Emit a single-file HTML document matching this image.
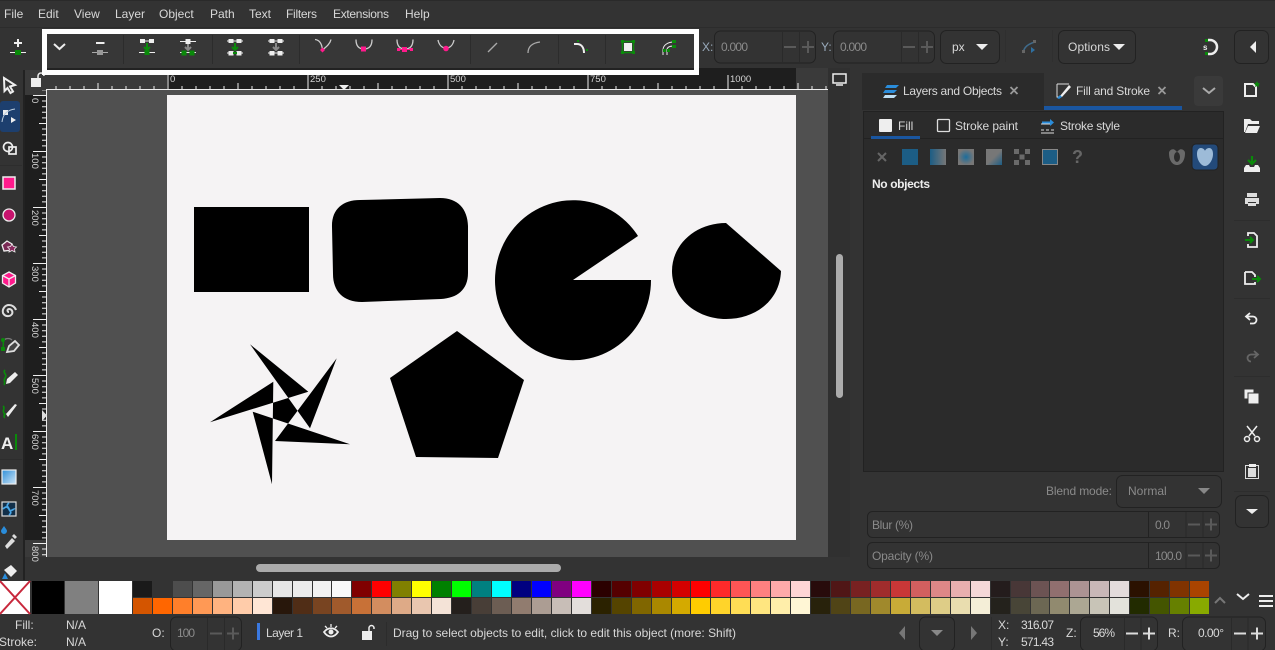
<!DOCTYPE html>
<html><head><meta charset="utf-8">
<style>
html,body{margin:0;padding:0;background:#333;width:1275px;height:650px;overflow:hidden}
svg{position:absolute;left:0;top:0;font-family:"Liberation Sans",sans-serif;font-size:12px}
.t{fill:#d8d8d8}.d{fill:#8a8a8a}.w{fill:#eee}
.f{fill:#333;stroke:#222;stroke-width:1}
.r{font-size:9.5px;fill:#d5d5d5}
#pal{position:absolute;left:133px;top:581px;width:1076px;height:33px;display:grid;grid-template-columns:repeat(54,1fr);grid-template-rows:1fr 1fr;gap:1px}
#pal i{display:block}
</style></head><body>
<svg width="1275" height="650" viewBox="0 0 1275 650">
<defs>
<linearGradient id="g1"><stop offset="0" stop-color="#1c5d85"/><stop offset="1" stop-color="#777"/></linearGradient>
<radialGradient id="g2"><stop offset="0" stop-color="#1c6d9c"/><stop offset="1" stop-color="#777"/></radialGradient>
<linearGradient id="g3" x1="0" y1="0" x2="1" y2="1"><stop offset="0" stop-color="#777"/><stop offset=".5" stop-color="#777"/><stop offset="1" stop-color="#1c5d85"/></linearGradient>
<linearGradient id="g4" x1="0" y1="0" x2="1" y2="1"><stop offset="0" stop-color="#2f8fd8"/><stop offset="1" stop-color="#cfe6f7"/></linearGradient>
<pattern id="hr" patternUnits="userSpaceOnUse" x="27.5" y="0" width="140" height="100"><path d="M.5 75V89M14.5 86V89M28.5 86V89M42.5 86V89M56.5 86V89M70.5 83V89M84.5 86V89M98.5 86V89M112.5 86V89M126.5 86V89" stroke="#eee" fill="none"/></pattern>
<pattern id="vr" patternUnits="userSpaceOnUse" x="0" y="39" width="60" height="56"><path d="M33 .5H46M42 6H46M42 11.7H46M42 17.3H46M42 22.9H46M39 28.5H46M42 34H46M42 39.7H46M42 45.3H46M42 50.9H46" stroke="#eee" fill="none"/></pattern>
</defs>
<rect width="1275" height="650" fill="#333"/>
<rect width="1275" height="1" fill="#2a2a2a"/>
<rect y="27" width="1275" height="1" fill="#2c2c2c"/>
<!-- menu -->
<g class="t"><text x="4" y="18">File</text><text x="38" y="18">Edit</text><text x="74" y="18">View</text><text x="115" y="18">Layer</text><text x="159" y="18">Object</text><text x="210" y="18">Path</text><text x="249" y="18">Text</text><text x="286" y="18" textLength="31">Filters</text><text x="333" y="18" textLength="56">Extensions</text><text x="405" y="18">Help</text></g>
<!-- add node -->
<path d="M14 43h8M18 39v8" stroke="#eee" stroke-width="2"/><path d="M10 52.500h16" stroke="#eee"/><rect x="15" y="50" width="6" height="5" fill="#0a8a0a"/>
<!-- rulers -->
<rect x="828" y="68" width="22" height="489" fill="#303030"/>
<rect x="699" y="68" width="129" height="22" fill="#1e1e1e"/>
<rect x="796" y="68" width="32" height="22" fill="#3a3a3a"/>
<rect x="25" y="70" width="142" height="20" fill="#3a3a3a"/>
<rect x="167" y="70" width="532" height="20" fill="#1e1e1e"/>
<rect x="25" y="90" width="21" height="467" fill="#3a3a3a"/>
<rect x="25" y="95" width="21" height="445" fill="#1e1e1e"/>
<rect x="47" y="70" width="781" height="20" fill="url(#hr)"/>
<rect x="46" y="89" width="782" height="1" fill="#eee"/>
<rect x="25" y="90" width="22" height="467" fill="url(#vr)"/>
<rect x="46" y="90" width="1" height="467" fill="#eee"/>
<g class="r"><text x="170" y="82">0</text><text x="310" y="82">250</text><text x="450" y="82">500</text><text x="590" y="82">750</text><text x="730" y="82">1000</text></g>
<g class="r"><text transform="translate(32 98) rotate(90)">0</text><text transform="translate(32 153) rotate(90)">100</text><text transform="translate(32 210) rotate(90)">200</text><text transform="translate(32 266) rotate(90)">300</text><text transform="translate(32 322) rotate(90)">400</text><text transform="translate(32 378) rotate(90)">500</text><text transform="translate(32 434) rotate(90)">600</text><text transform="translate(32 490) rotate(90)">700</text><text transform="translate(32 546) rotate(90)">800</text></g>
<path d="M339 85h10l-5 5z" fill="#eee"/><path d="M42 410v11l5-5.500z" fill="#ddd"/>
<!-- lock corner -->
<rect x="31" y="78" width="10" height="9" fill="#eee"/><path d="M38 79v-3a3 3 0 0 1 6 0" stroke="#eee" stroke-width="1.500" fill="none"/>
<!-- canvas -->
<rect x="47" y="90" width="781" height="467" fill="#505050"/>
<rect x="167" y="95" width="629" height="445" fill="#f5f3f4"/>
<rect x="194" y="207" width="115" height="85"/>
<path d="M332 227C331.500 209 343 200 360 200L440 198C458 198 467.500 209 468 226L468 273C468 290 457 298 441 299L362 302C343 302 333 291 333 274Z"/>
<path d="M651 280A78 80 0 1 1 638 236L573 280Z"/>
<path d="M726 223L781 271C780 300 756 319 726 319C696 319 672 298 672 271C672 244 696 223 726 223Z"/>
<path d="M457 331L524 380L498 458L416 457L390 378Z"/>
<path fill-rule="evenodd" d="M250 344.300L308.300 391.700L210 422.300L273.300 381.700L272 484.300L252.700 411.700L350 444.300L275 441L336.700 358.300L310 428.300Z"/>
<!-- scrollbars -->
<rect x="256" y="564" width="305" height="8" rx="4" fill="#ababab"/>
<rect x="836" y="254" width="7" height="144" rx="3.500" fill="#ababab"/>
<!-- monitor icon -->
<path d="M833 74h13v9h-13z" fill="none" stroke="#eee" stroke-width="1.500"/><path d="M836 85h7" stroke="#eee" stroke-width="1.500"/>
<!-- grip -->
<g fill="#ddd"><rect x="855" y="317" width="3" height="2"/><rect x="855" y="322" width="3" height="2"/><rect x="855" y="327" width="3" height="2"/></g>
<!-- highlighted toolbar -->
<rect x="44.500" y="31.500" width="652" height="41" fill="#373737" stroke="#fff" stroke-width="5"/>
<rect x="47" y="68" width="647" height="2" fill="#222"/>
<path d="M123.500 35V64M212.500 35V64M299.500 35V64M470.500 35V64M558.500 35V64M605.500 35V64" stroke="#2c2c2c"/>
<path d="M54 44l5.500 5 5.500-5" stroke="#eee" stroke-width="2" fill="none"/>
<!-- delete -->
<path d="M96 43h8.500" stroke="#eee" stroke-width="2"/><path d="M92 52.500h16" stroke="#aaa"/><rect x="97" y="50" width="6" height="5" fill="#999"/>
<!-- join nodes -->
<path d="M144 41h7" stroke="#eee"/><rect x="140" y="39" width="5" height="4" fill="#eee"/><rect x="149" y="39" width="5" height="4" fill="#eee"/>
<path d="M147 43v6M144 47l3 3 3-3" stroke="#0a8a0a" stroke-width="2" fill="none"/><path d="M139 52.500h16" stroke="#eee"/><rect x="144.500" y="50" width="5" height="5" fill="#0a8a0a"/>
<!-- break -->
<path d="M180 41.500h16" stroke="#eee"/><rect x="185.500" y="39" width="5" height="5" fill="#eee"/><path d="M188 44v5M185 47l3 3 3-3" stroke="#888" stroke-width="2" fill="none"/><path d="M180 52.500h16" stroke="#eee"/><rect x="181.500" y="50.500" width="5" height="5" fill="#0a8a0a"/><rect x="189.500" y="50.500" width="5" height="5" fill="#0a8a0a"/>
<!-- join segment -->
<path d="M227 41h16M227 53h16" stroke="#eee"/><rect x="228.500" y="39" width="5" height="4" fill="#eee"/><rect x="236.500" y="39" width="5" height="4" fill="#eee"/><rect x="228.500" y="51" width="5" height="4.500" fill="#eee"/><rect x="236.500" y="51" width="5" height="4.500" fill="#eee"/><path d="M235 43v6M232 47l3 3 3-3" stroke="#0a8a0a" stroke-width="2" fill="none"/><path d="M233 53h4" stroke="#0a8a0a" stroke-width="2"/>
<!-- delete segment -->
<path d="M268 41h16M268 53h16" stroke="#eee"/><path d="M273 41h6" stroke="#888" stroke-width="2"/><rect x="269.500" y="39" width="5" height="4" fill="#eee"/><rect x="277.500" y="39" width="5" height="4" fill="#eee"/><rect x="269.500" y="51" width="5" height="4.500" fill="#eee"/><rect x="277.500" y="51" width="5" height="4.500" fill="#eee"/><path d="M276 43v6M273 47l3 3 3-3" stroke="#888" stroke-width="2" fill="none"/>
<!-- node types -->
<path d="M315 39.500C320 40 322 45 322.500 50M331 39.500C330 44 326 47 322.500 50" stroke="#ccc" stroke-width="1.300" fill="none"/><path d="M322.500 47.500l2.500 2.500-2.500 2.500-2.500-2.500z" fill="#ff1a8c"/>
<path d="M356 39.500C356 46 359 49 364 49C369 49 372 46 372 39.500" stroke="#ccc" stroke-width="1.300" fill="none"/><rect x="361" y="46.500" width="5" height="5" fill="#ff1a8c"/>
<path d="M397 39.500C397 46 400 49 405 49C410 49 413 46 413 39.500" stroke="#ccc" stroke-width="1.300" fill="none"/><rect x="402" y="47" width="5" height="5" fill="#ff1a8c"/><path d="M397.500 49.500h15" stroke="#ff1a8c"/><rect x="397" y="48" width="3" height="3" fill="#ff1a8c"/><rect x="410" y="48" width="3" height="3" fill="#ff1a8c"/>
<path d="M438 40C439 45 442 48 446 48C450 48 453 45 454 40" stroke="#ccc" stroke-width="1.300" fill="none"/><circle cx="446" cy="48.500" r="2.800" fill="#ff1a8c"/>
<path d="M488 52L497 43" stroke="#aaa" stroke-width="1.300"/>
<path d="M528 53C528 47 532 43 540 42" stroke="#aaa" stroke-width="1.300" fill="none"/>
<path d="M574 44h3C581 44 584 47 584 53" stroke="#eee" stroke-width="2" fill="none"/><rect x="577" y="40" width="2" height="2" fill="#0a8a0a"/><rect x="586" y="49" width="2" height="2" fill="#0a8a0a"/>
<rect x="622.500" y="41.500" width="11" height="11" fill="none" stroke="#0a8a0a" stroke-width="1.500"/><rect x="624" y="43" width="8" height="8" fill="#eee"/><g fill="#0a8a0a"><rect x="621" y="40" width="3" height="3"/><rect x="632" y="40" width="3" height="3"/><rect x="621" y="51" width="3" height="3"/><rect x="632" y="51" width="3" height="3"/></g>
<path d="M663 55V50C663 45 668 42 674 42M667 55V50C667 47 670 46 674 46" stroke="#eee" fill="none"/><g fill="#0a8a0a"><rect x="672" y="40" width="4" height="3"/><rect x="672" y="45" width="4" height="3"/><rect x="663" y="49" width="3" height="3"/><rect x="667" y="49" width="3" height="3"/></g>
<!-- coord -->
<text x="702" y="51" fill="#9ab">X:</text>
<rect x="714.500" y="31" width="101" height="32" rx="6" class="f"/><text x="721" y="51" class="d" textLength="27">0.000</text><path d="M782.500 31V63M799.500 31V63" stroke="#2a2a2a"/><path d="M784 47h12M802 47h12M808 41v12" stroke="#5a5a5a" stroke-width="2"/>
<text x="821" y="51" fill="#9ab">Y:</text>
<rect x="833.500" y="31" width="101" height="32" rx="6" class="f"/><text x="840" y="51" class="d" textLength="27">0.000</text><path d="M901.500 31V63M918.500 31V63" stroke="#2a2a2a"/><path d="M903 47h12M921 47h12M927 41v12" stroke="#5a5a5a" stroke-width="2"/>
<rect x="940.500" y="30.500" width="59" height="33" rx="6" class="f"/><text x="952" y="51" class="t">px</text><path d="M976 44h12l-6 6z" fill="#eee"/>
<path d="M1005.500 30V62M1052.500 30V62" stroke="#2f2f2f"/>
<path d="M1023 53C1024 47 1028 44 1035 42" stroke="#3f6a8a" stroke-width="1.500" fill="none"/><rect x="1022" y="50" width="3" height="3" fill="#666"/><rect x="1033" y="40" width="3" height="3" fill="#666"/><path d="M1031 47l4 3-4 3z" fill="#2f6f9f"/>
<rect x="1058.500" y="30.500" width="77" height="33" rx="6" class="f"/><text x="1068" y="51" class="t" textLength="42">Options</text><path d="M1113 44h12l-6 6z" fill="#eee"/>
<path d="M1208 40h2a7 7 0 0 1 0 14h-2" fill="none" stroke="#eee" stroke-width="2.500"/><rect x="1205" y="39" width="3" height="3" fill="#0a8a0a"/><rect x="1205" y="52" width="3" height="3" fill="#0a8a0a"/><text x="1203" y="50" fill="#eee" font-size="8" font-weight="bold">s</text>
<rect x="1234.500" y="30.500" width="34" height="33" rx="6" class="f"/><path d="M1256 41v12l-6-6z" fill="#eee"/>
<!-- left toolbar -->
<rect x="23" y="70" width="2" height="510" fill="#222"/>
<path d="M0 165.500h22M0 459.500h22" stroke="#2d2d2d"/>
<rect x="0" y="101" width="20" height="31" rx="3" fill="#1d3f6e"/>
<path d="M4 78l11 7-5 1.500 3 5-2.500 1.500-3-5-3 3z" fill="#333" stroke="#eee" stroke-width="2"/>
<rect x="3" y="110" width="5" height="5" fill="#eee"/><path d="M2 122C3 113 8 110 15 109" stroke="#bcd" fill="none"/><path d="M11 117l5 3-5 3z" fill="#eee"/>
<circle cx="8" cy="147" r="4.500" fill="none" stroke="#eee" stroke-width="1.700"/><rect x="9" y="147" width="7" height="7" fill="none" stroke="#eee" stroke-width="1.700"/>
<rect x="3" y="177" width="12" height="12" fill="#ff1a8c" stroke="#eee" stroke-width="1.500"/>
<circle cx="9" cy="215" r="6" fill="#c8146e" stroke="#eee" stroke-width="1.300"/>
<path d="M7 241l5 3 0 6-8 1-2-6z" fill="#7a2a55" stroke="#eee" stroke-width="1.300"/><path d="M12 244l1.500 2.500 3 .5-2 2 .5 3-3-1.500-3 1.500.5-3-2-2 3-.5z" fill="#8a2a60" stroke="#eee" stroke-width=".8"/>
<path d="M9 272l6.500 3.500v7.500L9 287l-6.500-4v-7.500z" fill="#ff1a8c" stroke="#eee" stroke-width="1.300"/><path d="M2.500 275.500L9 279l6.500-3.500M9 279v8" stroke="#eee" stroke-width="1.300" fill="none"/>
<path d="M9 312c-2 0-2-3 0-3 3 0 4 3 3 5-2 3-7 3-9-1-1-4 2-8 6-8 3 0 6 2 7 5" fill="none" stroke="#ddd" stroke-width="2"/>
<path d="M3 341C4 343 3 346 3 349" stroke="#0a8a0a" stroke-width="1.500" fill="none"/><path d="M4 340C6 338 10 338 12 340" stroke="#777" stroke-width="1.300" fill="none"/><rect x="1" y="347" width="4" height="4" fill="#0a8a0a"/><circle cx="3" cy="340" r="2" fill="#0a8a0a"/><path d="M7 352l2-6 6-5 4 4-5 6z" fill="#444" stroke="#ddd" stroke-width="1.800"/>
<path d="M5 370C2 373 8 374 5 378C3 381 6 382 4 385" stroke="#0a8a0a" stroke-width="1.700" fill="none"/><path d="M7 379l8-7 3 3-8 8-4 1z" fill="#eee"/>
<path d="M3 406C6 408 1 411 5 414C3 416 5 417 4 418" stroke="#0a8a0a" stroke-width="1.700" fill="none"/><path d="M6 414l9-10 2 1-9 12z" fill="#eee"/>
<text x="1" y="449" fill="#eee" font-size="17" font-weight="bold">A</text><rect x="15" y="434" width="2" height="16" fill="#0a8a0a"/>
<rect x="2" y="470" width="14" height="14" fill="url(#g4)" stroke="#eee" stroke-width="1.200"/>
<rect x="2" y="502" width="14" height="14" fill="#12304a" stroke="#ddd" stroke-width="1.200"/><path d="M3 509C7 505 8 508 9 509C10 513 14 508 15 509M9 503C5 506 9 507 9 509C9 511 13 512 9 515" stroke="#49a7e8" stroke-width="1.700" fill="none"/>
<path d="M4 526c-2 3-3 4-3 5a3 3 0 0 0 6 0c0-1-1-2-3-5z" fill="#2a8ddb"/><path d="M5 546l7-8 3 3-8 8zM12 536l2-2 3 3-2 2z" fill="#ddd"/>
<path d="M4 570l7-5 6 6-6 6z" fill="#eee"/><path d="M2 579l3-6 3 6z" fill="#2a8ddb"/>
<!-- right panel -->
<rect x="850" y="70" width="12" height="510" fill="#333"/>
<rect x="862" y="73" width="362" height="37" fill="#2b2b2b"/>
<rect x="1044" y="73" width="138" height="37" fill="#333"/>
<rect x="1182" y="73" width="42" height="37" fill="#333"/>
<rect x="1044" y="106" width="138" height="4" fill="#1a56a0"/>
<rect x="1194" y="76" width="29" height="30" rx="4" fill="#3a3a3a"/><path d="M1203 88l6 5 6-5" stroke="#aaa" stroke-width="2" fill="none"/>
<path d="M887 85h12l-3 3h-11zM885 90h12l-3 3h-11z" fill="#2a8ddb"/><path d="M885 95h12l-3 3h-11z" fill="#bfe0f5"/>
<text x="903" y="95" class="t" textLength="99">Layers and Objects</text>
<path d="M1010.500 87l7 7M1017.500 87l-7 7" stroke="#999" stroke-width="1.800"/>
<path d="M1057 84h12M1057 84v13h3" stroke="#ddd" fill="none"/><path d="M1060 96l9-11 2 2-9 10z" fill="#eee"/><path d="M1057 98l3-3 2 2-3 2z" fill="#2a8ddb"/>
<text x="1076" y="95" class="t" textLength="74">Fill and Stroke</text>
<path d="M1158.500 87l7 7M1165.500 87l-7 7" stroke="#999" stroke-width="1.800"/>
<rect x="863.500" y="111.500" width="360" height="360" fill="#2b2b2b" stroke="#222"/>
<rect x="864" y="138" width="359" height="1" fill="#222"/>
<rect x="871" y="136" width="49" height="3" fill="#1a56a0"/>
<rect x="879" y="119" width="13" height="13" rx="1" fill="#eee"/><text x="898" y="130" class="t">Fill</text>
<rect x="937.500" y="119.500" width="12" height="12" rx="1" fill="none" stroke="#ddd" stroke-width="1.300"/><text x="955" y="130" class="t" textLength="63">Stroke paint</text>
<path d="M1041 124h11M1041 130h3M1046 130h3M1051 130h3M1041 133h13" stroke="#ddd"/><path d="M1042 122.500h9" stroke="#2a8ddb" stroke-width="2"/><path d="M1050 119l4 3.500-4 3.500z" fill="#2a8ddb"/>
<text x="1060" y="130" class="t" textLength="60">Stroke style</text>
<path d="M878 153l8 8M886 153l-8 8" stroke="#666" stroke-width="2"/>
<rect x="902" y="149" width="16" height="16" fill="#1c5d85"/>
<rect x="930" y="149" width="16" height="16" fill="url(#g1)"/>
<rect x="958" y="149" width="16" height="16" fill="url(#g2)"/>
<rect x="986" y="149" width="16" height="16" fill="url(#g3)"/>
<g fill="#6a6a6a"><rect x="1014" y="149" width="5" height="5"/><rect x="1025" y="149" width="5" height="5"/><rect x="1019.500" y="154.500" width="5" height="5"/><rect x="1014" y="160" width="5" height="5"/><rect x="1025" y="160" width="5" height="5"/></g>
<rect x="1042.500" y="149.500" width="15" height="15" fill="#1c5d85" stroke="#888" stroke-width="1"/>
<text x="1072" y="163" fill="#666" font-size="18" font-weight="bold">?</text>
<path d="M1169 153C1169 150 1173 148 1175 150L1177 152L1179 150C1181 148 1185 150 1185 153C1185 160 1182 165 1177 165C1172 165 1169 160 1169 153Z" fill="#6a6a6a"/><ellipse cx="1177" cy="157" rx="3" ry="5" fill="#2b2b2b"/>
<rect x="1192" y="144" width="26" height="26" rx="4" fill="#234a7a" stroke="#222"/>
<path d="M1201 148C1198 148 1197 151 1197 154C1197 160 1201 166 1205 166C1209 166 1213 160 1213 154C1213 151 1212 148 1209 148C1207 148 1205 150 1205 151C1205 150 1203 148 1201 148Z" fill="#9dbbd8"/>
<text x="872" y="188" class="w" font-weight="bold" font-size="12" textLength="58">No objects</text>
<text x="1046" y="495" class="d" textLength="66">Blend mode:</text>
<rect x="1116.500" y="475.500" width="105" height="32" rx="6" class="f"/><text x="1128" y="495" class="d">Normal</text><path d="M1198 488h12l-6 6z" fill="#888"/>
<rect x="867.500" y="511.500" width="352" height="26" rx="5" class="f"/><text x="872" y="529" class="d" textLength="41">Blur (%)</text><path d="M1148.500 512v25" stroke="#222"/><text x="1155" y="529" class="d" textLength="15">0.0</text><path d="M1186 512v25M1203 512v25" stroke="#2a2a2a"/><path d="M1188 524.500h12M1205 524.500h12M1211 518.500v12" stroke="#5a5a5a" stroke-width="2"/>
<rect x="867.500" y="542.500" width="352" height="26" rx="5" class="f"/><text x="872" y="560" class="d" textLength="61">Opacity (%)</text><path d="M1148.500 543v25" stroke="#222"/><text x="1155" y="560" class="d" textLength="27">100.0</text><path d="M1186 543v25M1203 543v25" stroke="#2a2a2a"/><path d="M1188 555.500h12M1205 555.500h12M1211 549.500v12" stroke="#5a5a5a" stroke-width="2"/>
<!-- right toolbar -->
<path d="M1234 220.500h36M1234 298.500h36M1234 376.500h36M1234 491.500h36" stroke="#2d2d2d"/>
<path d="M1245 84h8l3 3v9h-11z" fill="none" stroke="#eee" stroke-width="2"/><path d="M1257 81l1 2 2 .5-1.500 1.500.5 2-2-1-2 1 .5-2-1.500-1.500 2-.5z" fill="#0a8a0a"/>
<path d="M1244 132v-13h6l2 2h7v3h-11l-3 8zM1245 133l3-7h12l-3 7z" fill="#eee"/>
<path d="M1252 156v7M1248 160l4 4 4-4" stroke="#0a8a0a" stroke-width="2.200" fill="none"/><path d="M1246 165h3l1 2h4l1-2h3l2 3v4h-16v-4z" fill="#eee"/>
<path d="M1247 193h10v4h-10zM1245 198h14v6h-3v-2h-8v2h-3zM1248 203h8v3h-8z" fill="#ddd"/>
<path d="M1248 236v-3h6l3 3v11h-9v-3" fill="none" stroke="#eee" stroke-width="1.800"/><path d="M1245 240h7M1250 237l3 3-3 3" stroke="#0a8a0a" stroke-width="2" fill="none"/>
<path d="M1245 272h7l3 3v2M1255 282v2h-10v-12" fill="none" stroke="#eee" stroke-width="1.800"/><path d="M1252 279h7M1257 276l3 3-3 3" stroke="#0a8a0a" stroke-width="2" fill="none"/>
<path d="M1250 313l-4 3.500 4 3.500M1246 316.500h7a3.500 3.500 0 0 1 0 7h-3" fill="none" stroke="#eee" stroke-width="1.800"/>
<path d="M1254 351l4 3.500-4 3.500M1258 354.500h-7a3.500 3.500 0 0 0 0 7h0" fill="none" stroke="#666" stroke-width="1.800"/>
<rect x="1244" y="389" width="10" height="10" fill="#eee" stroke="#333"/><rect x="1248" y="393" width="11" height="11" fill="#eee" stroke="#333"/>
<path d="M1247 426l8 10M1257 426l-8 10" stroke="#eee" stroke-width="1.500"/><circle cx="1247" cy="439" r="2.500" fill="none" stroke="#eee" stroke-width="1.500"/><circle cx="1257" cy="439" r="2.500" fill="none" stroke="#eee" stroke-width="1.500"/>
<rect x="1245.500" y="465.500" width="13" height="13" fill="none" stroke="#ddd"/><rect x="1249" y="464" width="7" height="3" fill="#eee"/><path d="M1248 468h8v9h-8z" fill="#ddd"/>
<rect x="1235.500" y="495.500" width="33" height="32" rx="6" class="f"/><path d="M1246 509h12l-6 5z" fill="#eee"/>
<!-- palette left -->
<rect x="0" y="581" width="30" height="33" fill="#fff"/><path d="M0 581L30 614M30 581L0 614" stroke="#c8283c" stroke-width="2"/>
<rect x="32" y="581" width="32" height="33" fill="#000"/>
<rect x="65" y="581" width="33" height="33" fill="#808080"/>
<rect x="99" y="581" width="33" height="33" fill="#fff"/>
<path d="M1215 603l5-5 5 5" stroke="#777" stroke-width="2" fill="none"/><path d="M1237 594l6 5 6-5" stroke="#eee" stroke-width="2" fill="none"/><path d="M1259 596h14M1259 601h14M1259 606h14" stroke="#eee" stroke-width="2"/>
<!-- status -->
<text x="15" y="629" class="t">Fill:</text><text x="66" y="629" class="t">N/A</text>
<text x="-1" y="646" class="t">Stroke:</text><text x="66" y="646" class="t">N/A</text>
<text x="152" y="637" class="t">O:</text>
<rect x="170.500" y="617" width="71" height="34" rx="6" class="f"/><text x="177" y="637" class="d" textLength="18">100</text><path d="M207.500 617v33M224.500 617v33" stroke="#2a2a2a"/><path d="M210 633.500h12M227 633.500h12M233 627.500v12" stroke="#5a5a5a" stroke-width="2"/>
<rect x="257" y="623" width="3" height="17" fill="#3a78e0"/>
<text x="266" y="637" class="t" textLength="37">Layer 1</text>
<path d="M324 632C328 627 334 627 338 632C334 638 328 638 324 632Z" fill="none" stroke="#eee" stroke-width="1.800"/><circle cx="331" cy="632" r="2.500" fill="#eee"/><path d="M325 626l2 2M337 626l-2 2M331 624v3" stroke="#eee" stroke-width="1.300"/>
<rect x="362" y="631" width="10" height="9" fill="#eee"/><path d="M369 631v-3a2.500 2.500 0 0 1 5 0v1" fill="none" stroke="#eee" stroke-width="1.500"/>
<path d="M386.500 622v24" stroke="#2c2c2c"/>
<text x="393" y="637" class="t" textLength="343">Drag to select objects to edit, click to edit this object (more: Shift)</text>
<path d="M905 626v14l-6-7z" fill="#777"/>
<rect x="919.500" y="617" width="35" height="34" rx="6" class="f"/><path d="M931 630h12l-6 6z" fill="#888"/>
<path d="M971 626v14l6-7z" fill="#777"/>
<path d="M991.500 617v33" stroke="#2c2c2c"/>
<text x="998" y="629" class="t">X:</text><text x="1021" y="629" class="t" textLength="33">316.07</text>
<text x="998" y="646" class="t">Y:</text><text x="1021" y="646" class="t" textLength="33">571.43</text>
<text x="1066" y="637" class="t">Z:</text>
<rect x="1080.500" y="617" width="77" height="34" rx="6" class="f"/><text x="1093" y="637" class="t" textLength="22">56%</text><path d="M1124.500 617v33M1141 617v33" stroke="#2a2a2a"/><path d="M1126 633.500h12M1143 633.500h12M1149 627.500v12" stroke="#ddd" stroke-width="2"/>
<text x="1168" y="637" class="t">R:</text>
<rect x="1182.500" y="617" width="83" height="34" rx="6" class="f"/><text x="1198" y="637" class="t" textLength="26">0.00°</text><path d="M1231.500 617v33M1248 617v33" stroke="#2a2a2a"/><path d="M1234 633.500h12M1251 633.500h12M1257 627.500v12" stroke="#ddd" stroke-width="2"/>
</svg>
<div id="pal"><i style="background:#1a1a1a"></i><i style="background:#333"></i><i style="background:#4d4d4d"></i><i style="background:#666"></i><i style="background:#999"></i><i style="background:#b3b3b3"></i><i style="background:#ccc"></i><i style="background:#e6e6e6"></i><i style="background:#ececec"></i><i style="background:#f2f2f2"></i><i style="background:#f9f9f9"></i><i style="background:#800000"></i><i style="background:#f00"></i><i style="background:#808000"></i><i style="background:#ff0"></i><i style="background:#008000"></i><i style="background:#0f0"></i><i style="background:#008080"></i><i style="background:#0ff"></i><i style="background:#000080"></i><i style="background:#00f"></i><i style="background:#800080"></i><i style="background:#f0f"></i><i style="background:#2b0000"></i><i style="background:#550000"></i><i style="background:#800000"></i><i style="background:#a00"></i><i style="background:#d40000"></i><i style="background:#f00"></i><i style="background:#ff2a2a"></i><i style="background:#f55"></i><i style="background:#ff8080"></i><i style="background:#faa"></i><i style="background:#ffd5d5"></i><i style="background:#280b0b"></i><i style="background:#501616"></i><i style="background:#782121"></i><i style="background:#a02c2c"></i><i style="background:#c83737"></i><i style="background:#d35f5f"></i><i style="background:#de8787"></i><i style="background:#e9afaf"></i><i style="background:#f4d7d7"></i><i style="background:#241c1c"></i><i style="background:#483737"></i><i style="background:#6c5353"></i><i style="background:#916f6f"></i><i style="background:#ac9393"></i><i style="background:#c8b7b7"></i><i style="background:#e3dbdb"></i><i style="background:#2b1100"></i><i style="background:#520"></i><i style="background:#803300"></i><i style="background:#a40"></i><i style="background:#d45500"></i><i style="background:#f60"></i><i style="background:#ff7f2a"></i><i style="background:#f95"></i><i style="background:#ffb380"></i><i style="background:#fca"></i><i style="background:#ffe6d5"></i><i style="background:#28170b"></i><i style="background:#502d16"></i><i style="background:#784421"></i><i style="background:#a05a2c"></i><i style="background:#c87137"></i><i style="background:#d38d5f"></i><i style="background:#deaa87"></i><i style="background:#e9c6af"></i><i style="background:#f4e3d7"></i><i style="background:#241f1c"></i><i style="background:#483e37"></i><i style="background:#6c5d53"></i><i style="background:#917c6f"></i><i style="background:#ac9d93"></i><i style="background:#c8beb7"></i><i style="background:#e3dedb"></i><i style="background:#2b2200"></i><i style="background:#540"></i><i style="background:#806600"></i><i style="background:#a80"></i><i style="background:#d4aa00"></i><i style="background:#fc0"></i><i style="background:#ffd42a"></i><i style="background:#fd5"></i><i style="background:#ffe680"></i><i style="background:#fea"></i><i style="background:#fff6d5"></i><i style="background:#28220b"></i><i style="background:#504416"></i><i style="background:#786721"></i><i style="background:#a0892c"></i><i style="background:#c8ab37"></i><i style="background:#d3bc5f"></i><i style="background:#decd87"></i><i style="background:#e9ddaf"></i><i style="background:#f4eed7"></i><i style="background:#24221c"></i><i style="background:#484537"></i><i style="background:#6c6753"></i><i style="background:#918a6f"></i><i style="background:#aca793"></i><i style="background:#c8c4b7"></i><i style="background:#e3e2db"></i><i style="background:#222b00"></i><i style="background:#450"></i><i style="background:#668000"></i><i style="background:#8a0"></i></div>
</body></html>
